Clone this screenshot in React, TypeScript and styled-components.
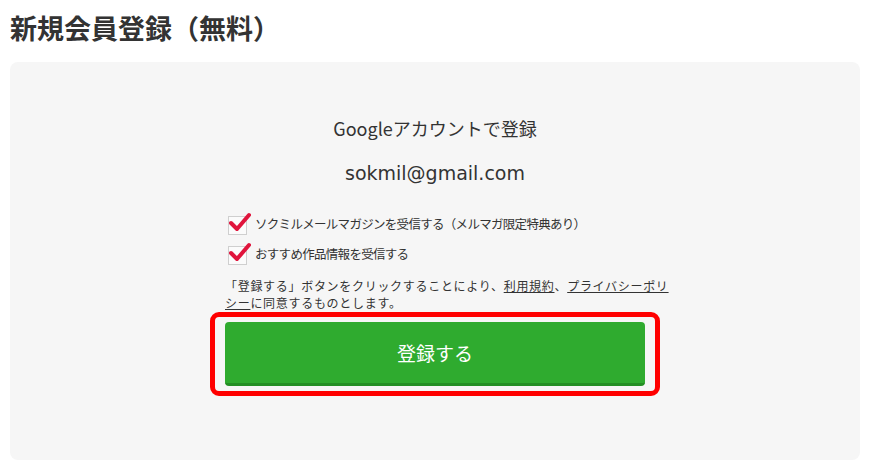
import React from 'react';
import styled, { createGlobalStyle } from 'styled-components';

const GlobalStyle = createGlobalStyle`
  body {
    margin: 0;
    background: #fff;
    font-family: "Noto Sans CJK JP", "Noto Sans", sans-serif;
    color: #333;
  }
`;

const Page = styled.div`
  padding: 10px 10px 14px;
`;

const Title = styled.h1`
  margin: 0 0 16px;
  font-size: 27px;
  line-height: 36px;
  font-weight: bold;
  color: #333;
`;

const Panel = styled.section`
  background: #f6f6f6;
  border-radius: 8px;
  padding: 54px 0 64px;
  display: flex;
  flex-direction: column;
  align-items: center;
`;

const Lead = styled.p`
  margin: 0;
  font-size: 18px;
  line-height: 24px;
  text-align: center;
`;

const Email = styled.p`
  margin: 20px 0 0;
  font-family: "DejaVu Sans", "Noto Sans", sans-serif;
  font-size: 19px;
  line-height: 26px;
  text-align: center;
`;

const Column = styled.div`
  width: 450px;
  margin-top: 26px;
  display: flex;
  flex-direction: column;
`;

const CheckRow = styled.label<{ $first?: boolean }>`
  display: flex;
  align-items: center;
  gap: 8px;
  height: 22px;
  margin: ${(p) => (p.$first ? '0' : '8px')} 0 0 18px;
  font-size: 12.5px;
  letter-spacing: -0.7px;
`;

const Box = styled.span`
  position: relative;
  flex: none;
  width: 17px;
  height: 17px;
  border: 1px solid #cfcfcf;
  background: #fbfbfb;
  margin-top: 4px;
`;

const Tick = styled.svg`
  position: absolute;
  left: 0;
  top: -6px;
`;

const Notice = styled.p`
  width: 450px;
  margin: 13px 0 0 15px;
  font-size: 12px;
  line-height: 17px;
  letter-spacing: 0.7px;
`;

const TextLink = styled.a`
  color: #333;
  text-decoration: underline;
`;

const Highlight = styled.div`
  margin-top: 1px;
  border: 5px solid #ff0000;
  border-radius: 9px;
  padding: 5px 10px;
`;

const SubmitButton = styled.button`
  display: block;
  width: 420px;
  height: 64px;
  border: 0;
  border-bottom: 3px solid #248f24;
  border-radius: 4px;
  background: #2fab2f;
  color: #fff;
  font-family: "Noto Sans CJK JP", sans-serif;
  font-size: 19px;
  cursor: pointer;
`;

const Check = () => (
  <Box>
    <Tick width="22" height="22" viewBox="0 0 22 22">
      <path d="M2 12 L8 18 L20 4" fill="none" stroke="#e0143c" strokeWidth="4" strokeLinecap="round" strokeLinejoin="round" />
    </Tick>
  </Box>
);

const App: React.FC = () => {
  const options = [
    'ソクミルメールマガジンを受信する（メルマガ限定特典あり）',
    'おすすめ作品情報を受信する',
  ];

  return (
    <>
      <GlobalStyle />
      <Page>
        <Title>新規会員登録（無料）</Title>
        <Panel>
          <Lead>Googleアカウントで登録</Lead>
          <Email>sokmil@gmail.com</Email>
          <Column>
            {options.map((label, i) => (
              <CheckRow key={i} $first={i === 0}>
                <Check />
                {label}
              </CheckRow>
            ))}
            <Notice>
              「登録する」ボタンをクリックすることにより、<TextLink href="#">利用規約</TextLink>、
              <TextLink href="#">プライバシーポリシー</TextLink>に同意するものとします。
            </Notice>
            <Highlight>
              <SubmitButton>登録する</SubmitButton>
            </Highlight>
          </Column>
        </Panel>
      </Page>
    </>
  );
};

export default App;
